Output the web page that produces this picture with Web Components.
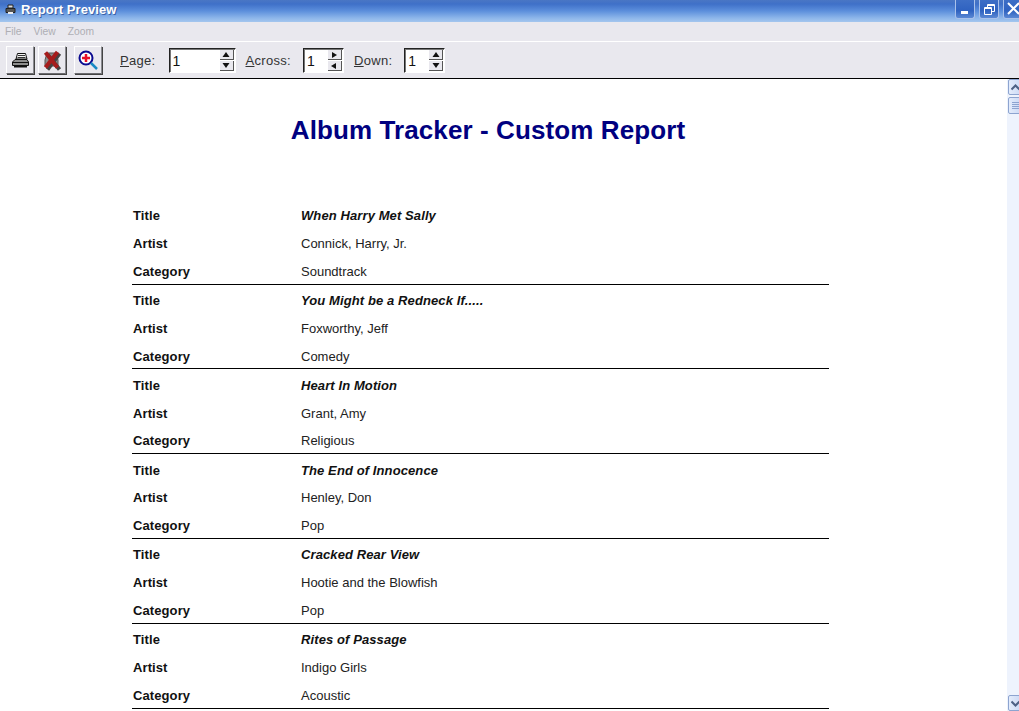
<!DOCTYPE html>
<html>
<head>
<meta charset="utf-8">
<title>Report Preview</title>
<style>
    html, body { margin: 0; height: 100%; overflow: hidden; background: #fff; }
    body { display: flex; flex-direction: column; height: 711px; font-family: "Liberation Sans", Arial, sans-serif; }
</style>
</head>
<body>
<title-bar>Report Preview</title-bar>
<menu-bar></menu-bar>
<tool-bar></tool-bar>
<report-view>
    <album-record title-text="When Harry Met Sally" artist="Connick, Harry, Jr." category="Soundtrack"></album-record>
    <album-record title-text="You Might be a Redneck If....." artist="Foxworthy, Jeff" category="Comedy"></album-record>
    <album-record title-text="Heart In Motion" artist="Grant, Amy" category="Religious"></album-record>
    <album-record title-text="The End of Innocence" artist="Henley, Don" category="Pop"></album-record>
    <album-record title-text="Cracked Rear View" artist="Hootie and the Blowfish" category="Pop"></album-record>
    <album-record title-text="Rites of Passage" artist="Indigo Girls" category="Acoustic"></album-record>
</report-view>

<script>
class TitleBar extends HTMLElement {
    connectedCallback() {
        this.attachShadow({ mode: 'open' });
        this.shadowRoot.innerHTML = `
            <style>
                :host {
                    display: flex;
                    align-items: center;
                    flex: none;
                    height: 22px;
                    padding-left: 5px;
                    background: linear-gradient(#4a76c4 0, #3f70c8 4px, #5c8fdc 11px, #8db6ea 18px, #a4c6ee 22px);
                    color: #fff;
                    font: bold 13px "Liberation Sans", Arial, sans-serif;
                    overflow: hidden;
                }
                .icon { width: 11px; height: 11px; margin-right: 5px; }
                .name { flex: 1; text-shadow: 1px 1px 0 #3a62a8; letter-spacing: 0.05px; margin-top: -3px; }
                .btns { display: flex; gap: 4px; align-self: flex-start; margin-right: -4px; }
                .btn {
                    width: 18px;
                    height: 18px;
                    border: 1px solid #a9c1ea;
                    border-top: 0;
                    border-radius: 0 0 3px 3px;
                    background: linear-gradient(#3d6ec6, #2f62c0 60%, #5a88d4);
                    display: flex;
                    align-items: center;
                    justify-content: center;
                }
                .btn svg { display: block; }
            </style>
            <svg class="icon" viewBox="0 0 11 11" style="margin-top:-4px">
                <path d="M3 1h5v3H3z" fill="#ddd" stroke="#222"/>
                <path d="M1 4.500h9v4H1z" fill="#555" stroke="#222"/>
                <path d="M3 8h5v2H3z" fill="#eee"/>
            </svg>
            <span class="name"><slot></slot></span>
            <div class="btns">
                <div class="btn"><svg width="17" height="16" viewBox="0 0 17 16"><path d="M4 10h7v3H4z" fill="#fff"/></svg></div>
                <div class="btn"><svg width="17" height="16" viewBox="0 0 17 16" fill="none" stroke="#fff"><path d="M3.500 6.500h7v7h-7z"/><path d="M3.500 7.500h7" /><path d="M6.500 6V3.500h7v7H11"/><path d="M6.500 4.500h7"/></svg></div>
                <div class="btn"><svg width="17" height="16" viewBox="0 0 17 16" fill="none" stroke="#fff" stroke-width="2"><path d="M3 2l11 11M14 2L3 13"/></svg></div>
            </div>
        `;
    }
}

class MenuBar extends HTMLElement {
    connectedCallback() {
        this.attachShadow({ mode: 'open' });
        this.shadowRoot.innerHTML = `
            <style>
                :host {
                    display: flex;
                    flex: none;
                    align-items: center;
                    gap: 12px;
                    height: 19px;
                    padding-left: 5px;
                    background: #e9e8ee;
                    border-bottom: 1px solid #fff;
                    color: #aeaeb4;
                    font: 10.3px "Liberation Sans", Arial, sans-serif;
                }
            </style>
            <span>File</span><span>View</span><span>Zoom</span>
        `;
    }
}

class ToolButton extends HTMLElement {
    connectedCallback() {
        this.attachShadow({ mode: 'open' });
        this.shadowRoot.innerHTML = `
            <style>
                :host {
                    display: flex;
                    align-items: center;
                    justify-content: center;
                    box-sizing: border-box;
                    width: 28px;
                    height: 28px;
                    background: #e9e8ee;
                    border: 1px solid;
                    border-color: #fff #8a8a90 #6c6c70 #fff;
                    box-shadow: 1px 1px 0 #444;
                }
            </style>
            <slot></slot>
        `;
    }
}

class SpinBox extends HTMLElement {
    connectedCallback() {
        const horizontal = this.hasAttribute('horizontal');
        const up = horizontal ? 'M2 1v6l5-3z' : 'M4 1L0.500 6h7z';
        const down = horizontal ? 'M6 1v6L1 4z' : 'M0.500 1h7L4 6z';
        this.attachShadow({ mode: 'open' });
        this.shadowRoot.innerHTML = `
            <style>
                :host {
                    display: flex;
                    flex: none;
                    box-sizing: border-box;
                    height: 25px;
                    background: #fff;
                    border: 1px solid;
                    border-color: #222 #fff #fff #222;
                    box-shadow: inset 1px 1px 0 #777;
                    font: 14px "Liberation Sans", Arial, sans-serif;
                    color: #111;
                }
                .val { flex: 1; padding: 4px 0 0 3px; }
                .arrows { width: 14px; display: flex; flex-direction: column; gap: 1px; margin: 1px 1px 1px 0; }
                .arrow {
                    flex: 1;
                    display: flex;
                    align-items: center;
                    justify-content: center;
                    background: #e9e8ee;
                    border-right: 1px solid #555;
                    border-bottom: 1px solid #555;
                }
            </style>
            <span class="val"><slot></slot></span>
            <div class="arrows">
                <div class="arrow"><svg width="8" height="7" viewBox="0 0 8 7"><path d="${up}" fill="#111"/></svg></div>
                <div class="arrow"><svg width="8" height="7" viewBox="0 0 8 7"><path d="${down}" fill="#111"/></svg></div>
            </div>
        `;
    }
}

class ToolBar extends HTMLElement {
    connectedCallback() {
        this.attachShadow({ mode: 'open' });
        this.shadowRoot.innerHTML = `
            <style>
                :host {
                    display: flex;
                    flex: none;
                    align-items: center;
                    box-sizing: border-box;
                    height: 37px;
                    padding: 0 0 0 6px;
                    background: #e9e8ee;
                    border-bottom: 1px solid #000;
                    font: 13px "Liberation Sans", Arial, sans-serif;
                    color: #333;
                }
                .label { letter-spacing: 0.3px; }
                .label u { text-underline-offset: 1px; }
            </style>
            <tool-button>
                <svg width="17" height="15" viewBox="0 0 17 15">
                    <path d="M5.500 .5h8l1.500 5.500H4z" fill="#f2f2f2" stroke="#111"/>
                    <path d="M6 2.500h7M5.500 4.500h8" stroke="#333"/>
                    <path d="M3 6.500h12l1.500 2.500v3.500H.5V9z" fill="#8e8e8e" stroke="#111"/>
                    <path d="M1 9.500h15" stroke="#111"/>
                    <path d="M2 13h13v1.500H2z" fill="#111"/>
                </svg>
            </tool-button>
            <tool-button style="margin-left:4px">
                <svg width="20" height="21" viewBox="0 0 20 21">
                    <path d="M5 3h9l2 7v6H3v-6z" fill="#8e8e8e" stroke="#555"/>
                    <path d="M4.500 3.500l12 15M16.500 2.500l-12 16" stroke="#444" stroke-width="4" transform="translate(1 1)"/>
                    <path d="M3.500 2.500l12 15M15.500 2l-12 15.500" stroke="#a51c1c" stroke-width="4"/>
                </svg>
            </tool-button>
            <tool-button style="margin-left:8px">
                <svg width="22" height="22" viewBox="0 0 22 22">
                    <circle cx="9" cy="9" r="6.500" fill="#fff" stroke="#0a0a90" stroke-width="2"/>
                    <path d="M9 5v8M5 9h8" stroke="#e8102a" stroke-width="2.500"/>
                    <path d="M14 14l6 6" stroke="#1a8ac4" stroke-width="2.500"/>
                </svg>
            </tool-button>
            <span class="label" style="margin-left:18px"><u>P</u>age:</span>
            <spin-box style="margin-left:13px;width:67px">1</spin-box>
            <span class="label" style="margin-left:10px"><u>A</u>cross:</span>
            <spin-box horizontal style="margin-left:12px;width:41px">1</spin-box>
            <span class="label" style="margin-left:10px"><u>D</u>own:</span>
            <spin-box style="margin-left:12px;width:41px">1</spin-box>
        `;
    }
}

class AlbumRecord extends HTMLElement {
    connectedCallback() {
        this.attachShadow({ mode: 'open' });
        this.shadowRoot.innerHTML = `
            <style>
                :host {
                    display: grid;
                    grid-template-columns: 169px 1fr;
                    grid-auto-rows: 27.8px;
                    align-items: center;
                    box-sizing: border-box;
                    width: 697px;
                    height: 84.8px;
                    padding-top: 2px;
                    border-bottom: 1px solid #000;
                    font: 13px "Liberation Sans", Arial, sans-serif;
                    color: #222;
                }
                .key { font-weight: bold; padding-left: 1px; letter-spacing: 0.1px; color: #111; }
                .name { font-weight: bold; font-style: italic; letter-spacing: 0.1px; color: #111; }
            </style>
            <span class="key">Title</span><span class="name">${this.getAttribute('title-text')}</span>
            <span class="key">Artist</span><span>${this.getAttribute('artist')}</span>
            <span class="key">Category</span><span>${this.getAttribute('category')}</span>
        `;
    }
}

class ScrollBar extends HTMLElement {
    connectedCallback() {
        this.attachShadow({ mode: 'open' });
        this.shadowRoot.innerHTML = `
            <style>
                :host {
                    display: flex;
                    flex-direction: column;
                    flex: none;
                    justify-content: space-between;
                    width: 12px;
                    background: #eef3fd;
                    overflow: hidden;
                }
                .top { display: flex; flex-direction: column; }
                .btn {
                    box-sizing: border-box;
                    flex: none;
                    width: 17px;
                    height: 16px;
                    margin-left: 1px;
                    background: linear-gradient(90deg, #e4ecfb, #c4d4f4);
                    border: 1px solid #8da4d0;
                    border-radius: 2px;
                    display: flex;
                    padding-left: 2px;
                    align-items: center;
                }
                .thumb { height: 17px; margin-top: 2px; }
            </style>
            <div class="top">
                <div class="btn"><svg width="9" height="7" viewBox="0 0 9 7"><path d="M0.500 5.500l4-4 4 4" fill="none" stroke="#4d6185" stroke-width="2"/></svg></div>
                <div class="btn thumb"><svg width="9" height="9" viewBox="0 0 9 9"><path d="M1 1.500h8M1 3.500h8M1 5.500h8M1 7.500h8" stroke="#8da4d0"/></svg></div>
            </div>
            <div class="btn"><svg width="9" height="7" viewBox="0 0 9 7"><path d="M0.500 1.500l4 4 4-4" fill="none" stroke="#4d6185" stroke-width="2"/></svg></div>
        `;
    }
}

class ReportView extends HTMLElement {
    connectedCallback() {
        this.attachShadow({ mode: 'open' });
        this.shadowRoot.innerHTML = `
            <style>
                :host {
                    display: flex;
                    flex: 1;
                    min-height: 0;
                    background: #fff;
                    overflow: hidden;
                }
                .page { flex: 1; padding: 0 0 0 132px; overflow: hidden; min-width: 0; }
                h1 {
                    margin: 0;
                    width: 712px;
                    box-sizing: border-box;
                    padding: 36px 0 0 0;
                    height: 120.8px;
                    text-align: center;
                    font: bold 26px "Liberation Sans", Arial, sans-serif;
                    color: #000080;
                    letter-spacing: 0.1px;
                }
            </style>
            <div class="page">
                <h1>Album Tracker - Custom Report</h1>
                <slot></slot>
            </div>
            <scroll-bar></scroll-bar>
        `;
    }
}

customElements.define('title-bar', TitleBar);
customElements.define('menu-bar', MenuBar);
customElements.define('tool-button', ToolButton);
customElements.define('spin-box', SpinBox);
customElements.define('tool-bar', ToolBar);
customElements.define('album-record', AlbumRecord);
customElements.define('scroll-bar', ScrollBar);
customElements.define('report-view', ReportView);
</script>
</body>
</html>
